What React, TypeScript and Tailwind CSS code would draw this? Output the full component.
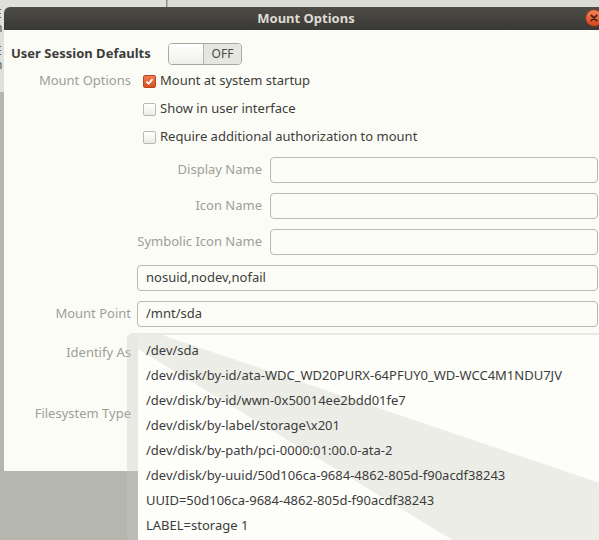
import React from "react";

function Check({ checked }: { checked?: boolean }) {
  if (checked) {
    return (
      <span className="flex h-[13px] w-[13px] items-center justify-center rounded-[2px] border border-[#b6461c] bg-gradient-to-b from-[#f07c50] to-[#d8501f]">
        <svg viewBox="0 0 10 10" className="h-[9px] w-[9px]">
          <path d="M1.6 5.1 L4 7.4 L8.4 2.4" stroke="#ffffff" strokeWidth="1.9" fill="none" />
        </svg>
      </span>
    );
  }
  return <span className="h-[13px] w-[13px] rounded-[2px] border border-[#b9b9b3] bg-gradient-to-b from-white to-[#ecece6]" />;
}

function CheckRow({ checked, children }: { checked?: boolean; children: React.ReactNode }) {
  return (
    <div className="flex h-[28px] items-center gap-[4px] pl-[6px] text-[#3c3c3c]">
      <Check checked={checked} />
      <span>{children}</span>
    </div>
  );
}

function Entry({ value }: { value?: string }) {
  return (
    <div className="flex h-[26px] flex-1 items-center rounded-[4px] border border-[#b9b9b2] bg-[#fcfcf7] px-[8px] text-[#3c3c3c]">
      {value}
    </div>
  );
}

function Label({ children }: { children?: React.ReactNode }) {
  return <div className="w-[127px] shrink-0 text-right text-[#9e9e99]">{children}</div>;
}

const devices = [
  "/dev/sda",
  "/dev/disk/by-id/ata-WDC_WD20PURX-64PFUY0_WD-WCC4M1NDU7JV",
  "/dev/disk/by-id/wwn-0x50014ee2bdd01fe7",
  "/dev/disk/by-label/storage\\x201",
  "/dev/disk/by-path/pci-0000:01:00.0-ata-2",
  "/dev/disk/by-uuid/50d106ca-9684-4862-805d-f90acdf38243",
  "UUID=50d106ca-9684-4862-805d-f90acdf38243",
  "LABEL=storage 1",
];

export default function App() {
  return (
    <div className="relative h-[540px] w-[599px] overflow-hidden bg-[#b5b7ae] font-['Noto_Sans',sans-serif] text-[13px]">
      {/* window behind the dialog, only its edge shows */}
      <div className="absolute left-0 top-0 h-[92px] w-[167px] border-r border-[#8f908a] bg-[#e0e0db] text-[12px] leading-[12px] text-[#555]">
        <div className="ml-[-5px] mt-[8px] flex flex-col">
          <span>E</span>
          <span className="mt-[2px]">n</span>
          <span className="mt-[11px]">E</span>
          <span className="mt-[2px]">n</span>
        </div>
      </div>
      <div className="absolute right-0 top-0 h-[8px] w-[431px] bg-[#dcdcd7]" />

      {/* dialog */}
      <div className="absolute left-[4px] top-[7px] w-[600px]">
        <div className="relative flex h-[23px] items-center justify-center rounded-tl-[6px] bg-gradient-to-b from-[#4d4c47] to-[#3a3935]">
          <span className="ml-[4px] text-[13px] font-bold text-[#dfdbd2]">Mount Options</span>
          <span className="absolute right-[1px] top-[2px]">
            <svg width="18" height="18" viewBox="0 0 18 18">
              <defs>
                <linearGradient id="cl" x1="0" y1="0" x2="0" y2="1">
                  <stop offset="0" stopColor="#f4845a" />
                  <stop offset="1" stopColor="#d6461a" />
                </linearGradient>
              </defs>
              <circle cx="9" cy="9" r="8.3" fill="url(#cl)" stroke="#8f3414" strokeWidth="0.8" />
              <path d="M6.3 6.3 L11.7 11.7 M11.7 6.3 L6.3 11.7" stroke="#4a1f0f" strokeWidth="1.7" strokeLinecap="round" />
            </svg>
          </span>
        </div>

        <div className="flex h-[441px] flex-col bg-[#fcfcf6] pr-[6px]">
          <div className="mt-[13px] flex h-[22px] items-center pl-[7px]">
            <div className="w-[157px] font-bold text-[#3c3c3c]">User Session Defaults</div>
            <div className="flex h-[22px] w-[74px] overflow-hidden rounded-[4px] border border-[#a9a9a3]">
              <div className="w-[35px] border-r border-[#b5b5af] bg-gradient-to-b from-[#ffffff] to-[#efefea]" />
              <div className="flex flex-1 items-center justify-center bg-[#e6e6e0] text-[12px] text-[#4a4a4a]">OFF</div>
            </div>
          </div>

          <div className="mt-[2px] flex items-center gap-[6px]">
            <Label>Mount Options</Label>
            <CheckRow checked>Mount at system startup</CheckRow>
          </div>
          <div className="flex items-center gap-[6px]">
            <Label />
            <CheckRow>Show in user interface</CheckRow>
          </div>
          <div className="flex items-center gap-[6px]">
            <Label />
            <CheckRow>Require additional authorization to mount</CheckRow>
          </div>

          <div className="mt-[6px] flex flex-col gap-[10px] pl-[133px]">
            {["Display Name", "Icon Name", "Symbolic Icon Name"].map((l) => (
              <div key={l} className="flex items-center gap-[8px]">
                <div className="w-[125px] shrink-0 text-right text-[#9e9e99]">{l}</div>
                <Entry />
              </div>
            ))}
          </div>

          <div className="mt-[10px] flex items-center gap-[6px]">
            <Label />
            <Entry value="nosuid,nodev,nofail" />
          </div>
          <div className="mt-[10px] flex items-center gap-[6px]">
            <Label>Mount Point</Label>
            <Entry value="/mnt/sda" />
          </div>
          <div className="flex h-[52px] items-center gap-[6px]">
            <Label>Identify As</Label>
          </div>
          <div className="mt-[22px] flex h-[26px] items-center gap-[6px]">
            <Label>Filesystem Type</Label>
          </div>
        </div>
      </div>

      {/* device list popup */}
      <div className="absolute left-[127px] top-[333px] h-[220px] w-[480px] rounded-tl-[6px] bg-[#c5c6bf]/35 pl-[11px] pt-[2px]">
        <div className="relative h-full overflow-hidden bg-[#fdfdf9]">
          <svg className="absolute inset-0" width="470" height="218" viewBox="0 0 470 218">
            <polygon points="0,0 24,0 462,148 462,218 336,218 0,14" fill="#ecede6" />
          </svg>
          <div className="relative flex flex-col pl-[8px] pt-[3px] text-[#3c3c3c]">
            {devices.map((d) => (
              <div key={d} className="flex h-[25px] items-center whitespace-nowrap">
                {d}
              </div>
            ))}
          </div>
        </div>
      </div>
    </div>
  );
}
